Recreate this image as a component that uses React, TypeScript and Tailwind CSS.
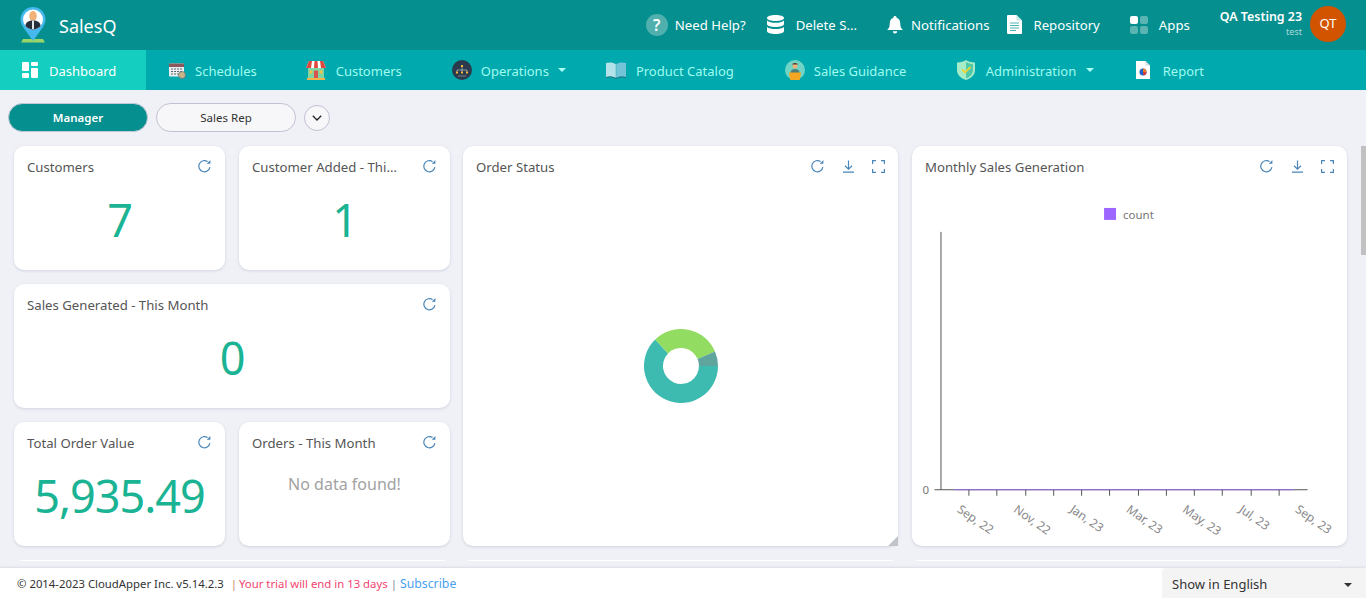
import React from "react";

const Refresh = () => (
  <svg width="15" height="15" viewBox="0 0 15 15" fill="none" stroke="#4a86b8" strokeWidth="1.2">
    <path d="M12.9 8.2A5.6 5.6 0 1 1 10.6 2.6" />
    <path d="M13.4 1v3.7H9.7z" fill="#4a86b8" stroke="none" />
  </svg>
);
const Download = () => (
  <svg width="11" height="13" viewBox="0 0 11 13" fill="none" stroke="#4a86b8" strokeWidth="1.2">
    <path d="M5.5 0.5v8.5M2 5.800 5.500 9.200 9 5.800M0 12.200h11" />
  </svg>
);
const Expand = () => (
  <svg width="13" height="13" viewBox="0 0 13 13" fill="none" stroke="#4a86b8" strokeWidth="1.2">
    <path d="M0.6 4V.6H4M9 .6h3.4V4M12.4 9v3.4H9M4 12.4H.6V9" />
  </svg>
);

const Card = ({ title, children, tools = false, className = "" }: { title: string; children?: React.ReactNode; tools?: boolean; className?: string }) => (
  <div className={`relative flex min-w-0 flex-col rounded-[10px] bg-white shadow-[0_1px_3px_rgba(60,70,110,0.18)] ${className}`}>
    <div className="flex h-[43px] items-center justify-between pl-[13px] pr-[13px] pt-[1px]">
      <span className="truncate text-[13.2px] text-[#555]">{title}</span>
      <div className="-mt-[3px] flex shrink-0 items-center gap-[18px] pl-[22px]">
        <Refresh />
        {tools && <Download />}
        {tools && <Expand />}
      </div>
    </div>
    {children}
  </div>
);

const Stat = ({ title, value, className = "" }: { title: string; value: string; className?: string }) => (
  <Card title={title} className={className}>
    <div className="-mt-[2px] text-center text-[45px] leading-[66px] tracking-[-1px] text-[#1ab394]">{value}</div>
  </Card>
);

const Logo = () => (
  <svg width="26" height="36" viewBox="0 0 26 36">
    <path d="M3 32h20l2 3.500H1Z" fill="#9bd56a" />
    <path d="M13 34 3 20A12.500 12.500 0 1 1 23 20Z" fill="#45b8ee" />
    <circle cx="13" cy="12.500" r="10" fill="#fff" />
    <ellipse cx="13" cy="9" rx="3.800" ry="5" fill="#eeb27a" />
    <path d="M5.500 19c0-4 3.500-5.500 7.500-5.500s7.500 1.500 7.500 5.500c-2 2.300-4.700 3.400-7.500 3.400s-5.500-1.100-7.500-3.400Z" fill="#262e3a" />
    <rect x="12" y="13.500" width="2" height="8.500" fill="#dfe6ea" />
  </svg>
);
const HelpIcon = () => (
  <div className="flex h-[22px] w-[22px] items-center justify-center rounded-full bg-[#4fb0ae] text-[16px] font-semibold text-white">?</div>
);
const DbIcon = () => (
  <svg width="17" height="19" viewBox="0 0 17 19" fill="#fff">
    <path d="M8.5 0C13 0 17 1.2 17 3s-4 3-8.500 3S0 4.800 0 3s4-3 8.500-3Z" />
    <path d="M0 5.500C1.500 7.200 5 7.800 8.500 7.800S15.500 7.200 17 5.500V9c0 1.800-4 3-8.500 3S0 10.800 0 9Z" />
    <path d="M0 12c1.500 1.500 5 2 8.500 2s7-.5 8.500-2v4c0 1.800-4 3-8.500 3S0 17.800 0 16Z" />
  </svg>
);
const BellIcon = () => (
  <svg width="16" height="18" viewBox="0 0 16 18" fill="#fff">
    <path d="M8 0a1.500 1.500 0 0 1 1.500 1.700C12 2.400 13.200 4.500 13.200 7c0 4 1 5.500 2.600 7H.2C1.800 12.500 2.800 11 2.800 7c0-2.500 1.200-4.600 3.700-5.300A1.500 1.500 0 0 1 8 0Z" />
    <path d="M5.800 15.300h4.400a2.200 2.200 0 0 1-4.400 0Z" />
  </svg>
);
const DocIcon = () => (
  <svg width="15" height="19" viewBox="0 0 15 19">
    <path d="M0 1a1 1 0 0 1 1-1h8.500L15 5.500V18a1 1 0 0 1-1 1H1a1 1 0 0 1-1-1Z" fill="#fff" />
    <path d="M9.500 0 15 5.500H9.500Z" fill="#c5e8e6" />
    <path d="M3 8h9M3 10.500h9M3 13h9M3 15.500h6" stroke="#4bb5b2" strokeWidth="1" />
  </svg>
);
const AppsIcon = () => (
  <div className="grid grid-cols-2 gap-[2px]">
    <span className="h-[8px] w-[8px] rounded-[2px] bg-white" />
    <span className="h-[8px] w-[8px] rounded-[2px] bg-[#5ab4b2]" />
    <span className="h-[8px] w-[8px] rounded-[2px] bg-[#5ab4b2]" />
    <span className="h-[8px] w-[8px] rounded-[2px] bg-[#5ab4b2]" />
  </div>
);

const DashIcon = () => (
  <svg width="16" height="16" viewBox="0 0 16 16" fill="#fff">
    <rect x="0" y="0" width="7" height="9" rx="1" />
    <rect x="9" y="0" width="7" height="4" rx="1" />
    <rect x="9" y="6" width="7" height="10" rx="1" />
    <rect x="0" y="11" width="7" height="5" rx="1" />
  </svg>
);
const CalIcon = () => (
  <svg width="17" height="17" viewBox="0 0 17 17">
    <rect x="0" y="1.500" width="15" height="13" rx="1" fill="#eceff1" />
    <rect x="0" y="1.500" width="15" height="3.500" fill="#8a5a5a" />
    <path d="M2 7h2M5 7h2M8 7h2M11 7h2M2 9.500h2M5 9.500h2M8 9.500h2M11 9.500h2M2 12h2M5 12h2M8 12h2" stroke="#5a6670" strokeWidth="1.200" />
    <circle cx="13" cy="13" r="3.500" fill="#c9b58a" stroke="#6d7378" strokeWidth=".8" />
  </svg>
);
const ShopIcon = () => (
  <svg width="20" height="20" viewBox="0 0 20 20">
    <rect x="2" y="8" width="16" height="10" fill="#7ed6a5" />
    <path d="M3 1h14l3 7H0Z" fill="#fff" />
    <path d="M3 1h3L5 8H0ZM8.500 1h3L12 8H8ZM14 1h3l3 7h-5Z" fill="#e0483f" />
    <rect x="8" y="10.500" width="4" height="7.500" fill="#d9534f" />
    <rect x="3.500" y="10.500" width="3" height="3" fill="#f5c04a" />
    <rect x="13.500" y="10.500" width="3" height="3" fill="#f5c04a" />
    <rect x="1" y="18" width="18" height="2" fill="#f2b64a" />
  </svg>
);
const OpsIcon = () => (
  <svg width="20" height="20" viewBox="0 0 20 20">
    <circle cx="10" cy="10" r="10" fill="#2b3a4c" />
    <rect x="9" y="5" width="2" height="2" fill="#f5b83d" />
    <path d="M10 7V10M5 11.500V10h10v1.500M10 10v1.500" stroke="#cfd8dc" strokeWidth=".6" fill="none" />
    <rect x="4" y="11.500" width="2" height="2" fill="#f5b83d" />
    <rect x="9" y="11.500" width="2" height="2" fill="#f5b83d" />
    <rect x="14" y="11.500" width="2" height="2" fill="#f5b83d" />
    <path d="M6 16h8" stroke="#8a97a5" strokeWidth=".8" />
  </svg>
);
const BookIcon = () => (
  <svg width="20" height="17" viewBox="0 0 20 17">
    <path d="M0 1c3.500-1 7-.7 9.800 1v14C7 14.300 3.500 14 0 15Z" fill="#b3e3e8" />
    <path d="M20 1c-3.500-1-7-.7-9.800 1v14C13 14.300 16.500 14 20 15Z" fill="#72c4d6" />
    <path d="M0 15.500c3.500-1 7-.7 10 1 3-1.700 6.500-2 10-1" stroke="#2f5f70" strokeWidth=".8" fill="none" />
  </svg>
);
const GuideIcon = () => (
  <svg width="20" height="20" viewBox="0 0 20 20">
    <circle cx="10" cy="10" r="10" fill="#6fd4c6" />
    <circle cx="10" cy="6" r="2.500" fill="#eeb27a" />
    <path d="M7 4.500c1-2 5-2 6 0Z" fill="#5a3b2a" />
    <path d="M5.500 13c0-3 2-4 4.500-4s4.500 1 4.500 4Z" fill="#4f7d78" />
    <path d="M4 12.500h12L14.800 20H5.200Z" fill="#f5a623" />
  </svg>
);
const ShieldIcon = () => (
  <svg width="18" height="20" viewBox="0 0 18 20">
    <path d="M9 0c2 1.500 5 2.500 9 2.500V10c0 5-4 8.500-9 10-5-1.500-9-5-9-10V2.500C4 2.500 7 1.500 9 0Z" fill="#a6ecc9" />
    <path d="M9 2c2 1.200 4.500 2 7 2.200V10c0 4-3 7-7 8.200Z" fill="#4fc9a8" />
    <path d="M5 9.500 8 12.500 13.500 7" stroke="#e8d639" strokeWidth="1.800" fill="none" />
  </svg>
);
const ReportIcon = () => (
  <svg width="14" height="18" viewBox="0 0 14 18">
    <path d="M0 0h9.500L14 4.500V18H0Z" fill="#fff" />
    <path d="M9.500 0 14 4.500H9.500Z" fill="#d5dde0" />
    <circle cx="7" cy="11" r="3.500" fill="#1f66c9" />
    <path d="M7 11V7.500A3.500 3.500 0 0 1 10.500 11Z" fill="#ef7b2c" />
    <path d="M7 11h3.500A3.500 3.500 0 0 1 7.500 14.500Z" fill="#d83b3b" />
  </svg>
);
const Caret = ({ color = "#a9fff4" }: { color?: string }) => (
  <span className="inline-block h-0 w-0 border-x-[4px] border-t-[4px] border-x-transparent" style={{ borderTopColor: color }} />
);

const TopItem = ({ icon, label, className }: { icon: React.ReactNode; label: string; className: string }) => (
  <div className={`flex items-center ${className}`}>
    {icon}
    <span className="pt-[2px] text-[13.2px] text-white">{label}</span>
  </div>
);

const NavItem = ({ icon, label, caret, className }: { icon: React.ReactNode; label: string; caret?: boolean; className: string }) => (
  <div className={`flex h-full items-center ${className}`}>
    <span className="flex w-[20px] shrink-0 justify-center">{icon}</span>
    <span className="whitespace-nowrap pt-[4px] text-[13px] text-[#9ffcef]">{label}</span>
    {caret && <span className="flex"><Caret /></span>}
  </div>
);

const months = ["Sep, 22", "Nov, 22", "Jan, 23", "Mar, 23", "May, 23", "Jul, 23", "Sep, 23"];
const LineChart = () => (
  <svg width="435" height="358" viewBox="0 0 435 358" fontFamily="'Noto Sans', sans-serif">
    <rect x="192" y="19" width="12" height="12" fill="#9d66ff" />
    <text x="211" y="30" fontSize="11.500" fill="#777">count</text>
    <path d="M28.500 43V301.500M22 301.500H396" stroke="#555" strokeWidth="1" fill="none" />
    <path d="M42 301.500H382" stroke="#9b6fe8" strokeWidth="1" />
    {Array.from({ length: 12 }, (_, i) => (
      <path key={i} d={`M${56.5 + Math.round(i * 28.25)} 301.500v6`} stroke="#555" />
    ))}
    <text x="10" y="306" fontSize="11.500" fill="#777">0</text>
    {months.map((m, i) => (
      <text key={m + i} transform={`translate(${44 + i * 56.5} 323) rotate(35)`} fontSize="12" fill="#888">{m}</text>
    ))}
  </svg>
);

const Donut = () => (
  <svg width="74" height="74" viewBox="-37 -37 74 74">
    <path d="M37 0A37 37 0 1 1 -25.800 -26.500L-13 -12.500A18 18 0 1 0 18 0Z" fill="#3ebbb1" />
    <path d="M-25.800 -26.500A37 37 0 0 1 34 -14.500L16.600 -7A18 18 0 0 0 -13 -12.500Z" fill="#92dc62" />
    <path d="M34 -14.500A37 37 0 0 1 37 0H18A18 18 0 0 0 16.600 -7Z" fill="#5fa49d" />
  </svg>
);

export default function App() {
  return (
    <div className="relative flex h-[598px] w-[1366px] flex-col overflow-hidden bg-[#f0f1f7] font-['Noto_Sans','Open_Sans',sans-serif]">
      <header className="flex h-[50px] shrink-0 items-center bg-[#058f8f]">
        <div className="ml-[20px] flex h-full items-center"><Logo /></div>
        <span className="ml-[13px] pt-[3px] text-[18px] text-white">SalesQ</span>
        <div className="ml-auto flex h-full items-center">
          <TopItem icon={<HelpIcon />} label="Need Help?" className="gap-[7px]" />
          <TopItem icon={<DbIcon />} label="Delete S..." className="ml-[21px] gap-[12px]" />
          <TopItem icon={<BellIcon />} label="Notifications" className="ml-[30px] gap-[8px]" />
          <TopItem icon={<DocIcon />} label="Repository" className="ml-[18px] gap-[11px]" />
          <TopItem icon={<AppsIcon />} label="Apps" className="ml-[30px] gap-[11px]" />
          <div className="-mt-[5px] ml-[30px] flex flex-col items-end">
            <span className="text-[12.400px] font-semibold leading-[18px] text-white">QA Testing 23</span>
            <span className="text-[9px] leading-[11px] text-[#a9dcd9]">test</span>
          </div>
          <div className="-mt-[2px] ml-[8px] mr-[20px] flex h-[36px] w-[36px] items-center justify-center rounded-full bg-[#d35400] text-[13px] text-white">QT</div>
        </div>
      </header>

      <nav className="flex h-[40px] shrink-0 items-center bg-[#00a9ae]">
        <div className="flex h-full w-[146px] items-center gap-[11px] bg-[#14cfbf] pl-[22px]">
          <DashIcon />
          <span className="pt-[4px] text-[13px] text-white">Dashboard</span>
        </div>
        <NavItem icon={<CalIcon />} label="Schedules" className="ml-[21px] gap-[8px]" />
        <NavItem icon={<ShopIcon />} label="Customers" className="ml-[49px] gap-[10px]" />
        <NavItem icon={<OpsIcon />} label="Operations" caret className="ml-[50px] gap-[9px]" />
        <NavItem icon={<BookIcon />} label="Product Catalog" className="ml-[40px] gap-[10px]" />
        <NavItem icon={<GuideIcon />} label="Sales Guidance" className="ml-[51px] gap-[9px]" />
        <NavItem icon={<ShieldIcon />} label="Administration" caret className="ml-[50px] gap-[9.500px]" />
        <NavItem icon={<ReportIcon />} label="Report" className="ml-[39px] gap-[10px]" />
      </nav>

      <main className="min-h-0 flex-1 overflow-hidden">
        <div className="flex h-[56px] items-center gap-[8px] pb-[1px] pl-[8px]">
          <div className="flex h-[29px] w-[140px] items-center justify-center rounded-full border border-[#c3c8d6] bg-[#058f8f] pt-[1px] text-[11.500px] font-semibold text-white">Manager</div>
          <div className="flex h-[29px] w-[140px] items-center justify-center rounded-full border border-[#c3bfd4] bg-[#f7f7f9] pt-[1px] text-[11.500px] text-[#333]">Sales Rep</div>
          <div className="flex h-[26px] w-[26px] items-center justify-center rounded-full border border-[#c3bfd4] bg-[#f7f7f9]">
            <svg width="10" height="6" viewBox="0 0 10 6" fill="none" stroke="#222" strokeWidth="1.300"><path d="M.8.8 5 5 9.200.8" /></svg>
          </div>
        </div>

        <div className="ml-[14px] grid w-[1333px] grid-cols-[449px_449px_435px]">
          <div className="grid h-[400px] w-[436px] grid-cols-2 grid-rows-3 gap-[14px]">
            <Stat title="Customers" value="7" />
            <Stat title="Customer Added - This Month" value="1" />
            <Stat title="Sales Generated - This Month" value="0" className="col-span-2" />
            <Stat title="Total Order Value" value="5,935.49" />
            <Card title="Orders - This Month">
              <div className="mt-[7px] text-center text-[16px] text-[#a2a2a2]">No data found!</div>
            </Card>
          </div>
          <Card title="Order Status" tools className="h-[400px] w-[435px]">
            <div className="mt-[140px] flex justify-center"><Donut /></div>
            <svg className="absolute bottom-0 right-0" width="10" height="10" viewBox="0 0 10 10"><path d="M10 0V10H0Z" fill="#c0c4c8" /></svg>
          </Card>
          <Card title="Monthly Sales Generation" tools className="h-[400px]"><LineChart /></Card>
        </div>

        <div className="ml-[20px] mt-[14px] flex gap-[23px]">
          <div className="h-px w-[425px] bg-white" />
          <div className="h-px w-[425px] bg-white" />
          <div className="h-px w-[425px] bg-white" />
        </div>
      </main>

      <footer className="flex h-[30px] shrink-0 items-baseline bg-white pl-[17px] text-[11.350px] leading-[32px] shadow-[0_-1px_2px_rgba(60,70,110,0.12)]">
        <span className="text-[#333]">© 2014-2023 CloudApper Inc. v5.14.2.3</span>
        <span className="ml-[7px] text-[#c98a5e]">|</span>
        <span className="ml-[2px] text-[#f2456f]">Your trial will end in 13 days</span>
        <span className="ml-[3px] text-[#7a8aa0]">|</span>
        <span className="ml-[3px] text-[12.300px] text-[#4a9fee]">Subscribe</span>
        <div className="ml-auto flex h-[30px] w-[204px] items-center justify-between self-start rounded-tl-[4px] bg-[#f4f4f4] pl-[10px] pr-[14px] pt-[3px] text-[13px] leading-normal text-[#333]">
          <span>Show in English</span>
          <Caret color="#333" />
        </div>
      </footer>

      <div className="absolute right-0 top-[146px] h-[109px] w-[5px] bg-[#c1c1c1]" />
    </div>
  );
}
